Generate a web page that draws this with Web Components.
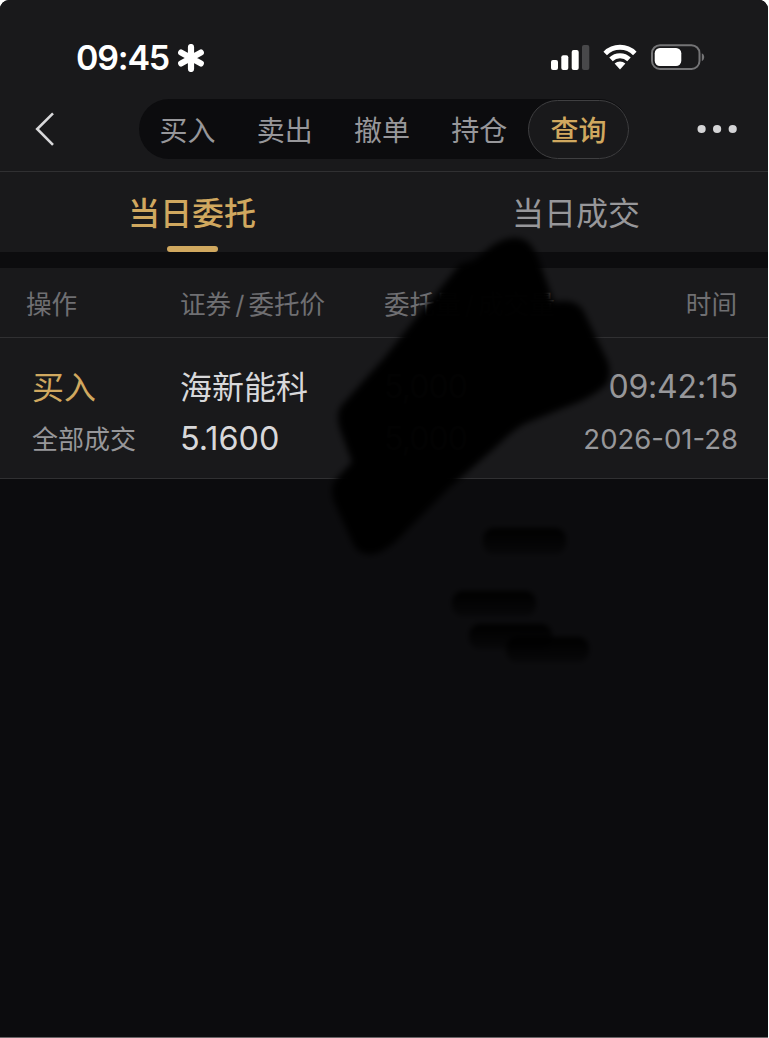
<!DOCTYPE html>
<html lang="zh-CN">
<head>
<meta charset="utf-8">
<title>当日委托</title>
<style>
  html, body { margin: 0; height: 100%; }
  body {
    background: #fff;
    font-family: Inter, "Noto Sans CJK SC", sans-serif;
    overflow: hidden;
  }
</style>
</head>
<body>
<trade-screen></trade-screen>

<script>
/** Clone markup into an open shadow root. */
function attach(el, html) {
  const template = document.createElement('template');
  template.innerHTML = html;
  el.attachShadow({ mode: 'open' }).appendChild(template.content.cloneNode(true));
}

/* Clock, signal, wifi and battery */
class StatusBar extends HTMLElement {
  constructor() {
    super();
    attach(this, `
      <style>
        :host {
          display: flex;
          justify-content: space-between;
          align-items: center;
          height: 84px;
          padding: 30px 63px 0 76px;
          box-sizing: border-box;
          color: #fff;
        }
        .left, .right { display: flex; align-items: center; }
        .left { gap: 8px; padding-top: 1px; }
        .time { font-size: 34px; line-height: 40px; font-weight: 600; letter-spacing: -1.2px; }
        svg { display: block; }
      </style>
      <div class="left">
        <span class="time"><slot></slot></span>
        <svg width="28" height="28" viewBox="0 0 28 28" stroke="#fff" stroke-width="6.2" stroke-linecap="round">
          <path d="M14 3v22M4.2 8.6l19.6 10.8M23.8 8.6L4.2 19.4"/>
        </svg>
      </div>
      <div class="right">
        <svg width="154" height="28" viewBox="0 0 154 28" fill="#fff">
          <rect x="0" y="17" width="7" height="10" rx="2"/>
          <rect x="10.3" y="12.3" width="7" height="14.7" rx="2"/>
          <rect x="20.7" y="7" width="7" height="20" rx="2"/>
          <rect x="31" y="2" width="7.3" height="25" rx="2" fill="#48484a"/>
          <g fill="none" stroke="#fff" stroke-width="5">
            <path d="M54.2 10.4a21 21 0 0 1 29.6 0"/>
            <path d="M60 16.4a13 13 0 0 1 18 0"/>
          </g>
          <path d="M63.6 20.6a8 8 0 0 1 10.8 0L69 26.4z"/>
          <rect x="101" y="2.2" width="47.5" height="23.8" rx="8" fill="none" stroke="#747476" stroke-width="2"/>
          <rect x="103.7" y="5" width="26.6" height="18" rx="5.2"/>
          <path d="M150.8 10.2c3.2 1.2 3.2 6.6 0 7.8z" fill="#747476"/>
        </svg>
      </div>
    `);
  }
}
customElements.define('status-bar', StatusBar);

/* One entry of the segmented control */
class NavPill extends HTMLElement {
  constructor() {
    super();
    attach(this, `
      <style>
        :host {
          display: grid;
          place-items: center;
          flex: 1 1 0;
          height: 60px;
          padding-top: 4px;
          box-sizing: border-box;
          font-size: 28px;
          line-height: 40px;
          color: #97979a;
          white-space: nowrap;
        }
        :host([active]) {
          flex: 0 0 101px;
          height: 59px;
          margin-top: 1px;
          padding-top: 3px;
          border: 1px solid #3f3f41;
          border-radius: 30px;
          background: #19191b;
          color: #d0a85f;
          font-weight: 500;
        }
      </style>
      <span><slot></slot></span>
    `);
  }
}
customElements.define('nav-pill', NavPill);

class NavBar extends HTMLElement {
  constructor() {
    super();
    attach(this, `
      <style>
        :host {
          display: flex;
          align-items: center;
          height: 88px;
          padding: 3px 31px 0 34px;
          box-sizing: border-box;
          border-bottom: 1px solid #303032;
        }
        .pills {
          display: flex;
          width: 490px;
          height: 60px;
          margin-left: 84px;
          border-radius: 30px;
          background: #0c0c0e;
        }
        .more { margin-left: auto; }
        svg { display: block; }
      </style>
      <svg width="21" height="36" viewBox="0 0 21 36" fill="none" stroke="#d8d8da" stroke-width="2.6">
        <path d="M19 2.4L3.2 18 19 33.8"/>
      </svg>
      <div class="pills"><slot></slot></div>
      <svg class="more" width="40" height="10" viewBox="0 0 40 10" fill="#d4d4d6">
        <circle cx="4.6" cy="5" r="4.1"/><circle cx="20.1" cy="5" r="4.1"/><circle cx="35.7" cy="5" r="4.1"/>
      </svg>
    `);
  }
}
customElements.define('nav-bar', NavBar);

class TabItem extends HTMLElement {
  constructor() {
    super();
    attach(this, `
      <style>
        :host {
          display: flex;
          flex-direction: column;
          align-items: center;
          justify-content: space-between;
          flex: 1 1 0;
          height: 80px;
          padding-top: 19px;
          box-sizing: border-box;
          font-size: 32px;
          line-height: 46px;
          color: #97979a;
        }
        :host([active]) { color: #d0a85f; font-weight: 500; }
        i { display: block; width: 51px; height: 6px; border-radius: 3px; }
        :host([active]) i { background: #d0a85f; }
      </style>
      <span><slot></slot></span>
      <i></i>
    `);
  }
}
customElements.define('tab-item', TabItem);

class OrderHead extends HTMLElement {
  constructor() {
    super();
    attach(this, `
      <style>
        :host {
          display: grid;
          grid-template-columns: 154px 204px 200px 1fr;
          align-items: center;
          height: 70px;
          padding: 4px 31px 0 26px;
          box-sizing: border-box;
          border-bottom: 1px solid #303032;
          font-size: 25.6px;
          line-height: 36px;
          word-spacing: -3.2px;
          color: #6f6f72;
          white-space: nowrap;
        }
        ::slotted(:last-child) { text-align: right; }
      </style>
      <slot></slot>
    `);
  }
}
customElements.define('order-head', OrderHead);

class OrderRow extends HTMLElement {
  constructor() {
    super();
    attach(this, `
      <style>
        :host {
          display: grid;
          grid-template-columns: 148px 204px 190px 1fr;
          grid-template-rows: 52px 52px;
          align-items: center;
          height: 141px;
          padding: 23px 30px 0 32px;
          box-sizing: border-box;
          border-bottom: 1px solid #303032;
          font-size: 32px;
          line-height: 46px;
          color: #d8d8da;
          white-space: nowrap;
        }
        .side { color: #d0a85f; }
        .side, .name { padding-top: 2px; }
        .state { padding-top: 1px; font-size: 26px; color: #97979a; }
        .price { font-size: 32.4px; }
        .amount { letter-spacing: -0.9px; }
        .time, .date { color: #97979a; text-align: right; }
        .time { letter-spacing: -0.2px; }
        .date { font-size: 27.5px; }
      </style>
      <span class="side"><slot name="side"></slot></span>
      <span class="name"><slot name="name"></slot></span>
      <span class="amount"><slot name="amount"></slot></span>
      <span class="time"><slot name="time"></slot></span>
      <span class="state"><slot name="state"></slot></span>
      <span class="price"><slot name="price"></slot></span>
      <span class="amount"><slot name="filled"></slot></span>
      <span class="date"><slot name="date"></slot></span>
    `);
  }
}
customElements.define('order-row', OrderRow);

/* Black marker strokes lying over the page */
class MarkerLayer extends HTMLElement {
  constructor() {
    super();
    attach(this, `
      <style>
        :host { position: absolute; inset: 0; pointer-events: none; }
        svg { display: block; }
      </style>
      <svg width="768" height="1037" viewBox="0 0 768 1037">
        <defs>
          <filter id="soft" x="-10%" y="-10%" width="120%" height="120%"><feGaussianBlur stdDeviation="3.2"/></filter>
          <filter id="faint" x="-20%" y="-60%" width="140%" height="220%"><feGaussianBlur stdDeviation="2.4"/></filter>
          <linearGradient id="fade" x1="0" y1="0" x2="0" y2="1">
            <stop offset="0" stop-color="#000" stop-opacity="1"/>
            <stop offset="1" stop-color="#000" stop-opacity=".35"/>
          </linearGradient>
        </defs>
        <path filter="url(#soft)" fill="#000" fill-opacity=".992" d="M460 264Q468 262 474 260L493 245Q514 232 528 242Q536 250 541 266L554 302Q575 298 583 310L608 362Q612 375 606 385Q590 399 566 407L524 424Q512 431 497 446L448 489L408 529Q390 550 374 554Q361 556 354 546L334 502Q329 488 336 479L352 462L341 432Q335 416 341 406L384 358L423 309L443 285Z"/>
        <g filter="url(#faint)" fill="url(#fade)">
          <rect x="483" y="528" width="83" height="26" rx="11"/>
          <rect x="452" y="591" width="84" height="25" rx="11"/>
          <rect x="469" y="624" width="83" height="25" rx="11"/>
          <rect x="506" y="637" width="83" height="25" rx="11"/>
        </g>
      </svg>
    `);
  }
}
customElements.define('marker-layer', MarkerLayer);

class TradeScreen extends HTMLElement {
  constructor() {
    super();
    attach(this, `
      <style>
        :host {
          display: flex;
          flex-direction: column;
          position: relative;
          width: 768px;
          height: 1038px;
          box-sizing: border-box;
          border-bottom: 1px solid #6b6668;
          border-radius: 9px 9px 0 0;
          background: #0c0c0e;
          overflow: hidden;
        }
        .panel { background: #19191b; }
        .tabs { display: flex; }
        .orders { margin-top: 16px; }
      </style>
      <header class="panel">
        <status-bar>09:45</status-bar>
        <nav-bar>
          <nav-pill>买入</nav-pill>
          <nav-pill>卖出</nav-pill>
          <nav-pill>撤单</nav-pill>
          <nav-pill>持仓</nav-pill>
          <nav-pill active>查询</nav-pill>
        </nav-bar>
        <div class="tabs">
          <tab-item active>当日委托</tab-item>
          <tab-item>当日成交</tab-item>
        </div>
      </header>
      <section class="panel orders">
        <order-head>
          <span>操作</span>
          <span>证券 / 委托价</span>
          <span>委托量 / 成交量</span>
          <span>时间</span>
        </order-head>
        <order-row>
          <span slot="side">买入</span>
          <span slot="name">海新能科</span>
          <span slot="amount">5,000</span>
          <span slot="time">09:42:15</span>
          <span slot="state">全部成交</span>
          <span slot="price">5.1600</span>
          <span slot="filled">5,000</span>
          <span slot="date">2026-01-28</span>
        </order-row>
      </section>
      <marker-layer></marker-layer>
    `);
  }
}
customElements.define('trade-screen', TradeScreen);
</script>
</body>
</html>
